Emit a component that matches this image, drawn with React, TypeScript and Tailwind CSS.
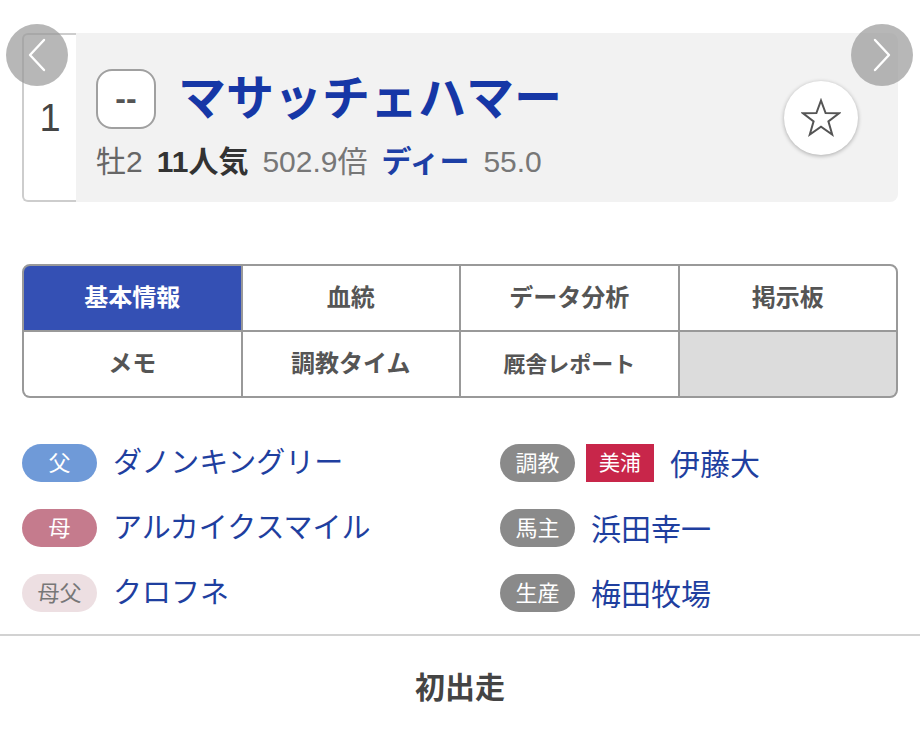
import React from "react";

const font = { fontFamily: '"Liberation Sans", "Noto Sans CJK JP", sans-serif' };

function Chevron({ dir }: { dir: "left" | "right" }) {
  return (
    <svg width="20" height="34" viewBox="0 0 20 34" fill="none">
      <polyline
        points={dir === "left" ? "17,2 3,17 17,32" : "3,2 17,17 3,32"}
        stroke="white"
        strokeWidth="2.4"
        strokeLinecap="round"
        strokeLinejoin="round"
      />
    </svg>
  );
}

function StarIcon() {
  return (
    <svg width="40" height="40" viewBox="0 0 40 40" fill="none">
      <polygon
        points="20,2.5 24.6,15 38,15.2 27.4,23.4 31.2,36.5 20,28.7 8.8,36.5 12.6,23.4 2,15.2 15.4,15"
        stroke="#555"
        strokeWidth="2"
        strokeLinejoin="miter"
      />
    </svg>
  );
}

const tabs = [
  { label: "基本情報", active: true },
  { label: "血統" },
  { label: "データ分析" },
  { label: "掲示板" },
  { label: "メモ" },
  { label: "調教タイム" },
  { label: "厩舎レポート", small: true },
  { label: "", empty: true },
];

function Pill({ label, className }: { label: string; className: string }) {
  return (
    <span
      className={
        "flex h-[38px] w-[75px] shrink-0 items-center justify-center rounded-full text-[22px] " +
        className
      }
    >
      {label}
    </span>
  );
}

export default function App() {
  return (
    <div className="min-h-[730px] bg-white" style={font}>
      {/* Header card */}
      <div className="px-[22px] pt-[33px]">
        <div className="relative flex h-[169px]">
          <div className="flex w-[54px] items-center justify-center rounded-l-md border-2 border-r-0 border-[#cdcdcd] bg-white pt-[2px] text-[38px] text-[#444]">
            1
          </div>
          <div className="flex flex-1 items-center rounded-r-lg bg-[#f2f2f2] pl-[20px] pr-[40px]">
            <div className="flex-1 pt-[16px]">
              <div className="flex items-center gap-[22px]">
                <div className="flex h-[60px] w-[60px] items-center justify-center rounded-[16px] border-2 border-[#a0a0a0] bg-white pb-[2px] text-[32px] font-bold text-[#555]">
                  --
                </div>
                <div className="text-[48px] font-bold leading-none text-[#1637a6]">
                  マサッチェハマー
                </div>
              </div>
              <div className="mt-[13px] flex items-baseline gap-[14px] text-[30px] leading-[40px]">
                <span className="text-[#666]">牡2</span>
                <span className="font-bold text-[#333]">11人気</span>
                <span className="text-[#777]">502.9倍</span>
                <span className="font-bold text-[#1d3fa5]">ディー</span>
                <span className="text-[#777]">55.0</span>
              </div>
            </div>
            <div className="flex h-[74px] w-[74px] items-center justify-center rounded-full bg-white shadow-[0_1px_4px_rgba(0,0,0,0.3)]">
              <StarIcon />
            </div>
          </div>
          <div className="absolute -left-[16px] -top-[9px] flex h-[62px] w-[62px] items-center justify-center rounded-full bg-[#999]/70">
            <Chevron dir="left" />
          </div>
          <div className="absolute -right-[15px] -top-[9px] flex h-[62px] w-[62px] items-center justify-center rounded-full bg-[#999]/70">
            <Chevron dir="right" />
          </div>
        </div>
      </div>

      {/* Tabs */}
      <div className="px-[22px] pt-[62px]">
        <div className="grid grid-cols-4 gap-[2px] overflow-hidden rounded-lg border-2 border-[#999] bg-[#999]">
          {tabs.map((t, i) => (
            <div
              key={i}
              className={
                "flex h-[64px] items-center justify-center font-bold " +
                (t.active
                  ? "bg-[#3450b4] text-white"
                  : t.empty
                  ? "bg-[#dcdcdc]"
                  : "bg-white text-[#555]") +
                (t.small ? " text-[22px]" : " text-[24px]")
              }
            >
              {t.label}
            </div>
          ))}
        </div>
      </div>

      {/* Info */}
      <div className="flex px-[22px] pt-[46px]">
        <div className="flex w-[478px] flex-col gap-[27px]">
          <div className="flex h-[38px] items-center gap-[16px]">
            <Pill label="父" className="bg-[#6f9ad8] text-white" />
            <span className="pt-[2px] text-[29px] text-[#1f3f9f]">ダノンキングリー</span>
          </div>
          <div className="flex h-[38px] items-center gap-[16px]">
            <Pill label="母" className="bg-[#c57b8d] text-white" />
            <span className="pt-[2px] text-[29px] text-[#1f3f9f]">アルカイクスマイル</span>
          </div>
          <div className="flex h-[38px] items-center gap-[16px]">
            <Pill label="母父" className="bg-[#eddfe2] text-[#777]" />
            <span className="pt-[2px] text-[29px] text-[#1f3f9f]">クロフネ</span>
          </div>
        </div>
        <div className="flex flex-col gap-[27px]">
          <div className="flex h-[38px] items-center">
            <Pill label="調教" className="bg-[#8a8a8a] text-white" />
            <span className="ml-[11px] flex h-[38px] w-[68px] items-center justify-center bg-[#c8264a] text-[21px] text-white">
              美浦
            </span>
            <span className="ml-[16px] pt-[2px] text-[30px] text-[#1f3f9f]">伊藤大</span>
          </div>
          <div className="flex h-[38px] items-center gap-[16px]">
            <Pill label="馬主" className="bg-[#8a8a8a] text-white" />
            <span className="pt-[2px] text-[30px] text-[#1f3f9f]">浜田幸一</span>
          </div>
          <div className="flex h-[38px] items-center gap-[16px]">
            <Pill label="生産" className="bg-[#8a8a8a] text-white" />
            <span className="pt-[2px] text-[30px] text-[#1f3f9f]">梅田牧場</span>
          </div>
        </div>
      </div>

      {/* Footer */}
      <div className="mt-[22px] border-t-2 border-[#d2d2d2]">
        <div className="flex h-[94px] items-center justify-center pt-[8px] text-[30px] font-bold text-[#444]">
          初出走
        </div>
      </div>
    </div>
  );
}
